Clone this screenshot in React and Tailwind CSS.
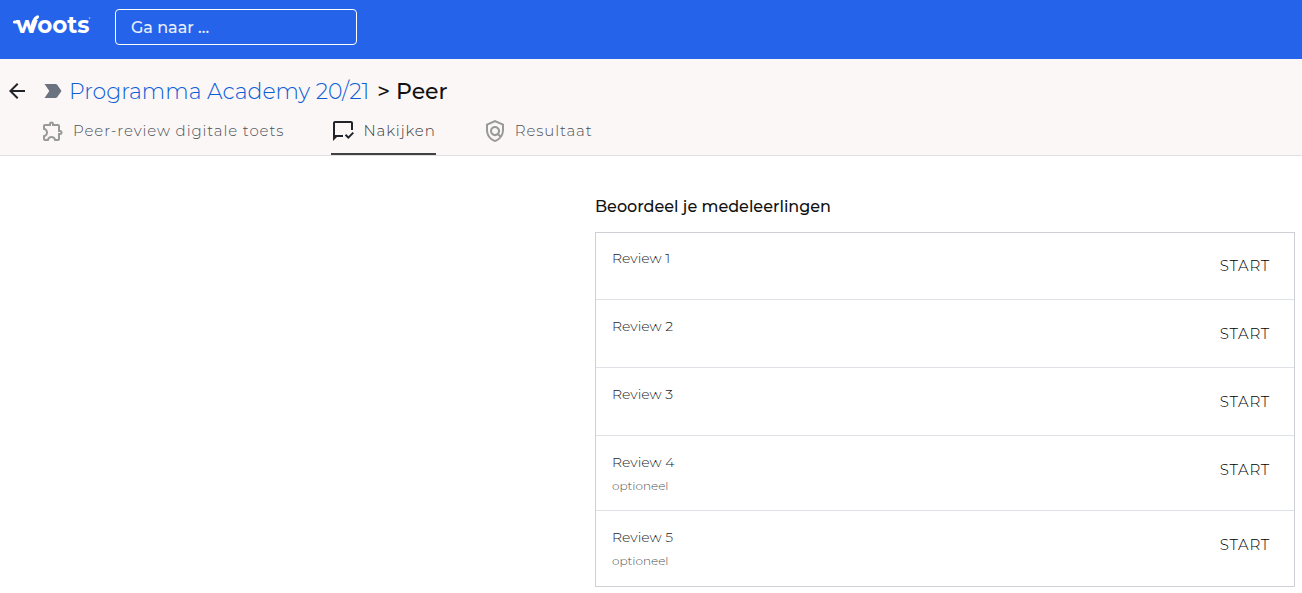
import {
  MdArrowBack,
  MdLabelImportant,
  MdOutlineExtension,
  MdOutlineMarkChatRead,
  MdOutlinePolicy,
} from 'react-icons/md';
import clsx from 'clsx';

const tabs = [
  { label: 'Peer-review digitale toets', icon: MdOutlineExtension },
  { label: 'Nakijken', icon: MdOutlineMarkChatRead, active: true },
  { label: 'Resultaat', icon: MdOutlinePolicy },
];

const reviews = [
  { id: 1, name: 'Review 1' },
  { id: 2, name: 'Review 2' },
  { id: 3, name: 'Review 3' },
  { id: 4, name: 'Review 4', optional: true },
  { id: 5, name: 'Review 5', optional: true },
];

function Logo() {
  return (
    <svg width="78" height="28" viewBox="0 0 78 28" className="block overflow-visible" role="img" aria-label="woots">
      <text x="3" y="20" fill="white" className="font-['Montserrat'] text-[23px] font-bold">
        woots
      </text>
      {/* serif and swash of the w */}
      <path
        d="M1.5 9H5M18.5 15.5C20 9.5 21 5.5 24.5 4"
        fill="none"
        stroke="white"
        strokeWidth="3.2"
        strokeLinecap="round"
      />
      <circle cx="76.5" cy="5" r="0.8" fill="white" opacity="0.7" />
    </svg>
  );
}

function TopBar() {
  return (
    <header className="flex items-start gap-6 bg-[#2563eb] pt-[9px] pb-[14px] pl-[13px]">
      <a href="#home" className="pt-1">
        <Logo />
      </a>
      <input
        type="text"
        aria-label="Ga naar"
        placeholder="Ga naar ..."
        className="h-9 w-[242px] rounded border border-white bg-transparent px-[15px] text-base font-medium text-white outline-none placeholder:text-white/90"
      />
    </header>
  );
}

function PageHeader() {
  return (
    <div className="border-b border-[#dee0e2] bg-[#fbf7f6] pt-4 pl-[5px]">
      <div className="flex h-8 items-center">
        <button type="button" aria-label="Terug" className="text-[#212529]">
          <MdArrowBack size={24} />
        </button>
        <MdLabelImportant size={24} className="ml-3 text-[#6b7280]" />
        <h1 className="ml-1 flex gap-2 pt-px text-[22px] leading-8 font-medium text-[#111111]">
          <a href="#programma" className="font-light text-[#0b5ed7]">Programma Academy 20/21</a>
          <span>&gt; Peer</span>
        </h1>
      </div>
      <nav className="flex gap-[47px] pl-9">
        {tabs.map(({ label, icon: Icon, active }) => (
          <a
            key={label}
            href="#tab"
            className={clsx(
              'flex h-12 items-center gap-2 border-b-2 pt-px text-[15px] font-light tracking-[0.06em]',
              active ? 'border-[#424242] text-[#343a40]' : 'border-transparent text-[#4b5258]'
            )}
          >
            <Icon size={24} className={active ? 'text-[#212529]' : 'text-[#999999]'} />
            <span className="pt-px">{label}</span>
          </a>
        ))}
      </nav>
    </div>
  );
}

function ReviewRow({ review }) {
  return (
    <li className="flex min-h-[68px] items-start justify-between border-b border-[#dee2e6] px-4 first:-mt-px last:min-h-[75px] last:border-b-0">
      <div className="pt-[14px] pb-3">
        <p className="text-sm leading-6 font-light text-[#212529]">{review.name}</p>
        {review.optional && <p className="text-xs leading-6 font-light text-[#495057]">optioneel</p>}
      </div>
      <button type="button" className="mt-4 h-9 px-2 text-[15px] font-light tracking-wider text-black">
        START
      </button>
    </li>
  );
}

export default function App() {
  return (
    <div className="min-h-screen bg-white font-['Montserrat','Inter',sans-serif]">
      <TopBar />
      <PageHeader />
      <main className="flex flex-col items-end pt-[39px] pr-[7px]">
        <section className="w-full max-w-[700px]">
          <h2 className="mb-[13px] text-base leading-6 font-medium text-[#111111]">Beoordeel je medeleerlingen</h2>
          <ul className="border border-[#ced0d5]">
            {reviews.map((review) => (
              <ReviewRow key={review.id} review={review} />
            ))}
          </ul>
        </section>
      </main>
    </div>
  );
}
